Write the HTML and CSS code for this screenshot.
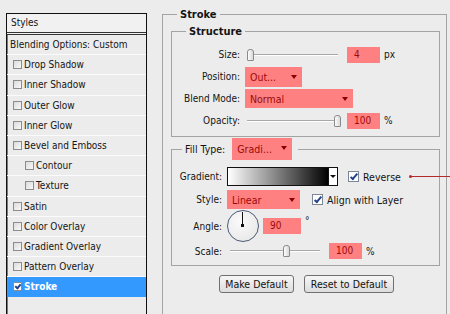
FILE: index.html
```html
<!DOCTYPE html>
<html lang="en">
<head>
    <meta charset="UTF-8">
    <meta name="viewport" content="width=device-width, initial-scale=1.0">
    <title>Layer Style - Stroke</title>
    <link rel="stylesheet" href="styles.css">
</head>
<body>
    <div class="dialog">
        <div class="styles-panel">
            <div class="panel-head">Styles</div>
            <div class="style-row blend">Blending Options: Custom</div>
            <div class="style-row"><span class="cb"></span>Drop Shadow</div>
            <div class="style-row"><span class="cb"></span>Inner Shadow</div>
            <div class="style-row"><span class="cb"></span>Outer Glow</div>
            <div class="style-row"><span class="cb"></span>Inner Glow</div>
            <div class="style-row"><span class="cb"></span>Bevel and Emboss</div>
            <div class="style-row sub"><span class="cb"></span>Contour</div>
            <div class="style-row sub"><span class="cb"></span>Texture</div>
            <div class="style-row"><span class="cb"></span>Satin</div>
            <div class="style-row"><span class="cb"></span>Color Overlay</div>
            <div class="style-row"><span class="cb"></span>Gradient Overlay</div>
            <div class="style-row"><span class="cb"></span>Pattern Overlay</div>
            <div class="style-row active"><span class="cb checked"></span>Stroke</div>
        </div>

        <div class="settings">
            <fieldset class="group outer">
                <legend>Stroke</legend>

                <fieldset class="group structure">
                    <legend>Structure</legend>
                    <div class="row">
                        <span class="label">Size:</span>
                        <div class="slider"><span class="thumb" style="left: 0px"></span></div>
                        <span class="field">4</span>
                        <span class="unit">px</span>
                    </div>
                    <div class="row">
                        <span class="label">Position:</span>
                        <span class="select pos">Out...</span>
                    </div>
                    <div class="row">
                        <span class="label">Blend Mode:</span>
                        <span class="select mode">Normal</span>
                    </div>
                    <div class="row">
                        <span class="label">Opacity:</span>
                        <div class="slider"><span class="thumb" style="left: 87px"></span></div>
                        <span class="field">100</span>
                        <span class="unit">%</span>
                    </div>
                </fieldset>

                <fieldset class="group fill">
                    <legend>
                        <span class="legend-text">Fill Type:</span>
                        <span class="select type">Gradi...</span>
                    </legend>
                    <div class="row grad-row">
                        <span class="label">Gradient:</span>
                        <div class="gradient"><span class="grad-arrow"></span></div>
                        <span class="check checked"></span>
                        <span class="check-label">Reverse</span>
                    </div>
                    <div class="row style-row2">
                        <span class="label">Style:</span>
                        <span class="select linear">Linear</span>
                        <span class="check checked align"></span>
                        <span class="check-label">Align with Layer</span>
                    </div>
                    <div class="row angle-row">
                        <span class="label">Angle:</span>
                        <div class="dial"><span class="needle"></span><span class="hub"></span></div>
                        <span class="field angle">90</span>
                        <span class="degree">°</span>
                    </div>
                    <div class="row scale-row">
                        <span class="label">Scale:</span>
                        <div class="slider short"><span class="thumb" style="left: 53px"></span></div>
                        <span class="field">100</span>
                        <span class="unit">%</span>
                    </div>
                </fieldset>

                <div class="buttons">
                    <button type="button" class="btn make">Make Default</button>
                    <button type="button" class="btn reset">Reset to Default</button>
                </div>
            </fieldset>
        </div>

        <div class="callout"><span class="dot"></span></div>
    </div>
</body>
</html>
```

FILE: styles.css
```css
body {
    margin: 0;
    width: 450px;
    height: 314px;
    overflow: hidden;
    background-color: #ececec;
    font-family: "DejaVu Sans Condensed", "Liberation Sans", Arial, sans-serif;
    font-size: 10px;
    color: #141414;
}

.dialog {
    position: relative;
    display: flex;
    align-items: flex-start;
    height: 314px;
    overflow: hidden;
}

/* left list of effects */
.styles-panel {
    margin: 13px 0 0 6px;
    width: 141px;
    height: 302px;
    box-sizing: border-box;
    border: 1px solid #111;
    box-shadow: inset 1px 1px 0 #7a7a7a;
}

.panel-head {
    height: 18px;
    line-height: 18px;
    padding-left: 4px;
    border-bottom: 3px double #333;
    background-color: #f1f1f1;
}

.style-row {
    display: flex;
    align-items: center;
    height: 19.2px;
    padding-left: 6px;
    border-bottom: 1px solid #fbfbfb;
}

.style-row.blend {
    padding-left: 3px;
}

.style-row.sub {
    padding-left: 18px;
}

.style-row.active {
    background-color: #3399ff;
    color: #fff;
    font-weight: bold;
    border-bottom-color: #3399ff;
}

.cb {
    width: 9px;
    height: 9px;
    box-sizing: border-box;
    margin-right: 2px;
    border: 1px solid #8c8c8c;
    background: linear-gradient(135deg, #dcdcdc, #f8f8f8);
}

.cb.checked,
.check.checked {
    position: relative;
    background: #fff;
}

.cb.checked::after,
.check.checked::after {
    content: "";
    position: absolute;
    left: 2px;
    top: 0;
    width: 2px;
    height: 4px;
    border: solid #26448c;
    border-width: 0 2px 2px 0;
    transform: rotate(40deg);
}

/* right settings */
.settings {
    margin-left: 15px;
    width: 285px;
}

.group {
    margin: 0;
    border: 1px solid #a3a3a3;
    padding: 0;
}

.group legend {
    padding: 0 3px;
    line-height: 13px;
    font-weight: bold;
    font-size: 11px;
}

.outer {
    margin-top: 8px;
    height: 307px;
    box-sizing: border-box;
    padding: 4px 6px 0 8px;
}

.outer > legend {
    margin-left: 6px;
}

.structure {
    padding: 6px 0 5px 0;
}

.structure > legend {
    margin-left: 14px;
}

.row {
    display: flex;
    align-items: center;
    height: 21px;
}

.structure .row + .row {
    margin-top: 1px;
}

.label {
    text-align: right;
    margin-right: 5px;
    flex-shrink: 0;
}

.structure .label {
    width: 68px;
}

.fill .label {
    width: 50px;
}

.slider {
    position: relative;
    width: 91px;
    height: 12px;
    margin-left: 2px;
}

.slider::before {
    content: "";
    position: absolute;
    left: 0;
    right: 0;
    top: 5px;
    height: 1px;
    background-color: #a8a8a8;
    border-bottom: 1px solid #fff;
}

.slider.short {
    width: 90px;
    margin-left: 3px;
}

.thumb {
    position: absolute;
    top: 0;
    width: 5px;
    height: 10px;
    border: 1px solid #8a8a8a;
    border-radius: 3px 3px 1px 1px;
    background: linear-gradient(to right, #fdfdfd, #d8d8d8);
}

.field {
    width: 33px;
    height: 16px;
    line-height: 16px;
    box-sizing: border-box;
    margin-left: 9px;
    padding-left: 7px;
    background-color: #ff8080;
    color: #9a0a0a;
}

.unit {
    margin-left: 4px;
}

.select {
    position: relative;
    display: flex;
    align-items: center;
    height: 20px;
    box-sizing: border-box;
    padding-left: 5px;
    background-color: #ff8080;
    color: #9a0a0a;
    font-weight: normal;
    font-size: 10.5px;
}

.select::after {
    content: "";
    position: absolute;
    right: 5px;
    top: 8px;
    border-left: 3.5px solid transparent;
    border-right: 3.5px solid transparent;
    border-top: 4px solid #8a0000;
}

.select.pos {
    width: 57px;
}

.select.mode {
    width: 108px;
    height: 19px;
}

/* fill type */
.fill {
    margin-top: 1px;
    padding: 7px 0 6px 0;
}

.fill > legend {
    display: flex;
    align-items: center;
    margin-left: 10px;
    padding: 0 6px 0 3px;
}

.legend-text {
    font-weight: normal;
    font-size: 10.5px;
    margin-right: 7px;
}

.select.type {
    width: 60px;
    height: 22px;
}

.grad-row {
    height: 19px;
}

.gradient {
    position: relative;
    width: 111px;
    height: 19px;
    box-sizing: border-box;
    border: 1px solid #111;
    background: linear-gradient(to right, #fff, #000 92%);
}

.grad-arrow {
    position: absolute;
    right: 0;
    top: 0;
    bottom: 0;
    width: 8px;
    background-color: #fff;
    border-left: 1px solid #111;
}

.grad-arrow::after {
    content: "";
    position: absolute;
    left: 1px;
    top: 7px;
    border-left: 3px solid transparent;
    border-right: 3px solid transparent;
    border-top: 3px solid #111;
}

.check {
    width: 11px;
    height: 11px;
    box-sizing: border-box;
    margin-left: 10px;
    border: 1px solid #7c8796;
}

.check.checked::after {
    left: 3px;
    top: 0;
    width: 2px;
    height: 6px;
}

.check.align {
    margin-left: 12px;
}

.check-label {
    margin-left: 4px;
    font-size: 10.5px;
}

.style-row2 {
    height: 19px;
    margin-top: 4px;
}

.select.linear {
    width: 73px;
    height: 19px;
}

.angle-row {
    height: 32px;
    margin-top: 1px;
}

.dial {
    position: relative;
    width: 32px;
    height: 32px;
    box-sizing: border-box;
    border: 1.5px solid #4c5b78;
    border-radius: 50%;
    background: radial-gradient(circle at 40% 35%, #fafafa, #e4e4e4);
}

.needle {
    position: absolute;
    left: 14px;
    top: 1px;
    width: 1px;
    height: 14px;
    background-color: #111;
}

.hub {
    position: absolute;
    left: 13px;
    top: 13px;
    width: 3px;
    height: 3px;
    background-color: #111;
}

.field.angle {
    width: 38px;
    margin-left: 4px;
}

.degree {
    align-self: flex-start;
    margin: 5px 0 0 4px;
}

.scale-row {
    height: 16px;
    margin-top: 1px;
}

.buttons {
    display: flex;
    gap: 10px;
    margin-top: 9px;
    padding-left: 48px;
}

.btn {
    height: 18px;
    padding: 0;
    border: 1px solid #707070;
    border-radius: 3px;
    background: linear-gradient(#f7f7f7, #dcdcdc);
    font-family: inherit;
    font-size: 10.5px;
    color: #111;
}

.btn.make {
    width: 75px;
}

.btn.reset {
    width: 90px;
}

/* red pointer line on the right */
.callout {
    position: absolute;
    left: 410px;
    top: 176px;
    width: 40px;
    height: 1px;
    background-color: #b32b2b;
}

.callout .dot {
    position: absolute;
    left: -1px;
    top: -1px;
    width: 3px;
    height: 3px;
    border-radius: 50%;
    background-color: #b32b2b;
}
```
